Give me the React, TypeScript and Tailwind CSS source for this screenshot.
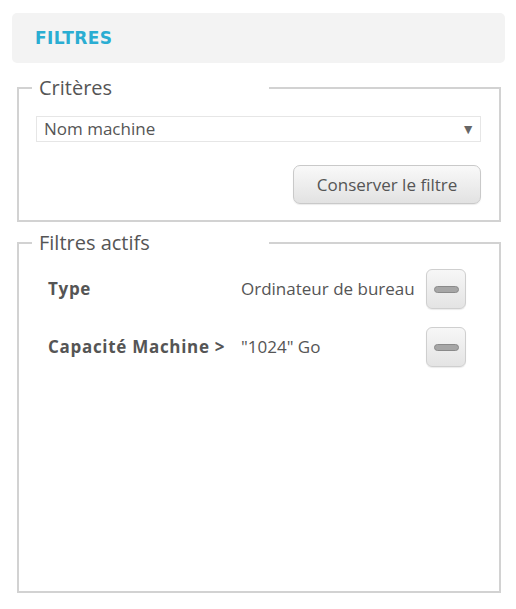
import React from "react";

function MinusButton() {
  return (
    <button className="flex h-[40px] w-[40px] items-center justify-center rounded-[6px] border border-[#cfcfcf] bg-gradient-to-b from-[#f7f7f7] to-[#e4e4e4] shadow-[0_1px_1px_rgba(0,0,0,0.08)]">
      <span className="block h-[7px] w-[25px] rounded-full border border-[#8a8a8a] bg-[#a6a6a6]" />
    </button>
  );
}

export default function App() {
  const font = { fontFamily: '"Open Sans", "Liberation Sans", sans-serif' };
  return (
    <div className="h-[609px] w-[516px] bg-white text-[#555]" style={font}>
      <div className="pt-[13px] pl-[12px] pr-[11px]">
        <div className="flex h-[50px] items-center rounded-[5px] bg-[#f3f3f3] pl-[23px]">
          <span
            className="pt-[2px] text-[17px] font-bold tracking-[0.4px] text-[#2aadd2]"
            style={{ fontFamily: '"DejaVu Sans", Verdana, sans-serif' }}
          >
            FILTRES
          </span>
        </div>
      </div>

      <fieldset className="mt-[13px] ml-[17px] mr-[15px] h-[146px] border-2 border-[#d2d2d2] px-0">
        <legend className="ml-[13px] w-[237px] pl-[7px] text-[20px] leading-[24px] text-[#555]">
          Critères
        </legend>
        <div className="mt-[16px] ml-[17px] mr-[18px] flex h-[26px] items-center justify-between border border-[#e6e6e6] pl-[7px] pr-[5px] text-[17px]">
          <span>Nom machine</span>
          <span className="text-[14px] leading-none text-[#666]">▼</span>
        </div>
        <div className="mt-[23px] mr-[18px] flex justify-end">
          <button className="h-[39px] w-[188px] rounded-[7px] border border-[#c9c9c9] bg-gradient-to-b from-[#f9f9f9] to-[#e2e2e2] text-[17px] text-[#555] shadow-[0_1px_1px_rgba(0,0,0,0.08)]">
            Conserver le filtre
          </button>
        </div>
      </fieldset>

      <fieldset className="mt-[9px] ml-[17px] mr-[15px] h-[362px] border-2 border-[#d2d2d2] px-0">
        <legend className="ml-[13px] w-[237px] pl-[7px] text-[20px] leading-[24px] text-[#555]">
          Filtres actifs
        </legend>
        <div className="mt-[14px] grid grid-cols-[193px_185px_40px] items-center gap-y-[18px] pl-[29px] text-[17px]">
          <span className="font-bold tracking-[0.7px]">Type</span>
          <span>Ordinateur de bureau</span>
          <MinusButton />
          <span className="font-bold tracking-[0.7px]">Capacité Machine &gt;</span>
          <span>"1024" Go</span>
          <MinusButton />
        </div>
      </fieldset>
    </div>
  );
}
